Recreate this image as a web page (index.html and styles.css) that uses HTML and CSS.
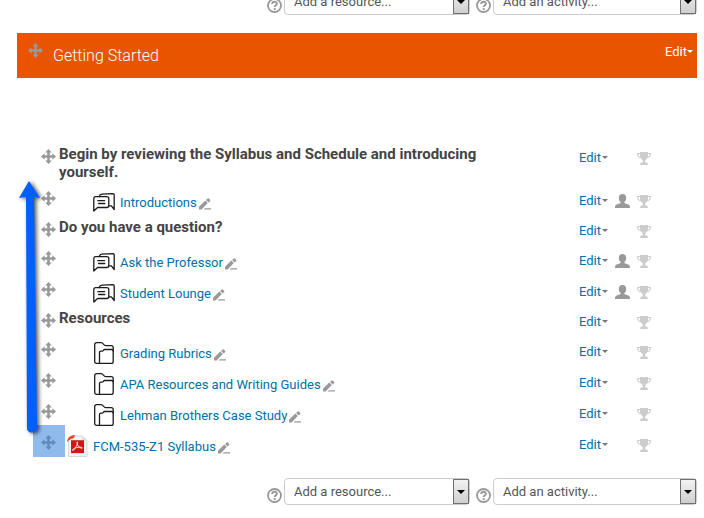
FILE: index.html
```html
<!DOCTYPE html>
<html lang="en">
<head>
    <meta charset="UTF-8">
    <meta name="viewport" content="width=device-width, initial-scale=1.0">
    <title>Getting Started</title>
    <link rel="stylesheet" href="styles.css">
</head>
<body>
    <svg class="sprite" aria-hidden="true">
        <symbol id="move" viewBox="0 0 15 15">
            <path d="M7.5 0l3.3 3.6H8.8v2.6h2.6v-2L15 7.5l-3.6 3.3v-2H8.8v2.6h2L7.5 15l-3.3-3.6h2V8.8H3.6v2L0 7.5l3.6-3.3v2h2.6V3.6h-2z"/>
        </symbol>
        <symbol id="help" viewBox="0 0 15 15">
            <circle cx="7.5" cy="7.5" r="6.5" fill="none" stroke="currentColor" stroke-width="1.8"/>
            <path d="M5.2 6.1c0-3.2 4.7-3 4.7-.4 0 1.5-2.2 1.7-2.2 3.3" fill="none" stroke="currentColor" stroke-width="2"/>
            <path d="M6.7 10.1h2V12h-2z"/>
        </symbol>
        <symbol id="pencil" viewBox="0 0 12 12">
            <path d="M0 8.800L6.300 2.600l2.500 2.500L2.600 11.400H0zM7.100 1.900L8.700.4c.3-.3.700-.3 1 0L11.200 1.900c.3.300.3.700 0 1L9.600 4.400zM5.800 10.200H12v1.200H4.600z"/>
        </symbol>
        <symbol id="trophy" viewBox="0 0 14 13">
            <path d="M3 0h8v1h3c0 3.200-1.300 5-3.900 5.300C9.500 7.400 8.900 8 8.200 8.200v2.300h1.100c.9 0 1.500.6 1.500 1.500v1H3.200v-1c0-.9.600-1.500 1.500-1.500h1.100V8.200C5.100 8 4.500 7.400 3.900 6.300 1.300 6 0 4.200 0 1h3zM1.200 2.100c.2 1.700.8 2.700 1.900 3-.1-.9-.1-1.900-.1-3zM12.800 2.100H11c0 1.100 0 2.100-.1 3 1.100-.3 1.700-1.300 1.900-3z"/>
        </symbol>
        <symbol id="user" viewBox="0 0 15 14">
            <path d="M7.5 0c2.300 0 3.700 1.600 3.700 4 0 1.900-.7 3.300-1.800 4v1c1.200.7 3.800 1 5 2.200.5.600.6 1.700.6 2.800H0c0-1.100.1-2.200.6-2.800C1.800 10 4.400 9.700 5.600 9V8C4.500 7.300 3.800 5.900 3.800 4c0-2.400 1.400-4 3.700-4z"/>
        </symbol>
        <symbol id="forum" viewBox="0 0 22 19">
            <g fill="none" stroke="#1c1c1c" stroke-width="1.3" stroke-linejoin="round" stroke-linecap="round">
                <path d="M2.800 3.700h11c1.400 0 2 .7 2 2v6.800c0 1.300-.6 2-2 2H4.600L.8 18V5.700c0-1.300.6-2 2-2z"/>
                <path d="M6.200 3.500C6.600 1.900 7.200 1.300 9 1.200l11-.5c.8 0 1.200.4 1.200 1.200v14.600l-2.800-3.600h-2.400"/>
                <path d="M4.800 7.700h6.800M5.600 10.500h6.200"/>
            </g>
        </symbol>
        <symbol id="folder" viewBox="0 0 20 22">
            <g fill="none" stroke="#1c1c1c" stroke-width="1.3" stroke-linejoin="round">
                <path d="M5.500 21.300H2.600c-1.200 0-1.900-.7-1.900-1.900V2.600C.7 1.300 1.400.7 2.600.7h4.700c1.900 0 2.300 3 4.400 3h5.500c1.400 0 2 .7 2 2v3.800"/>
                <path d="M5.500 21.300V10.500c0-.8.400-1.300 1.200-1.300h1.500c1.200 0 1.200-1.700 2.400-1.700h7.200c.9 0 1.400.5 1.400 1.400v10.500c0 1.200-.7 1.900-1.900 1.900z"/>
            </g>
        </symbol>
        <symbol id="pdf" viewBox="0 0 20 21">
            <path d="M3 1h11.500L19 5v15.500H1.500V5z" fill="#f3f3f3" stroke="#cfcfcf" stroke-width=".8"/>
            <path d="M14.500 1.200L19 5.500h-4.500z" fill="#dadada"/>
            <path d="M0 7C.3 2.800 2.300.6 7.800 0L6.300 3C3.200 3.500 1.600 4.700 0 7z" fill="#e8432d"/>
            <path d="M3.800 5h12.400v12.300H3.800z" fill="#d01616"/>
            <path d="M9.500 6.500c1.400 0 .2 4-3.500 8.200-1.500.4-.7-1.900 3-2.700s5.800-.3 5.500.5c-.4.900-5.300-1.600-5-6z" fill="none" stroke="#fff" stroke-width=".8"/>
        </symbol>
    </svg>

    <main class="course">
        <div class="add-bar">
            <svg class="help"><use href="#help"/></svg>
            <span class="picker resource">
                <select aria-label="Add a resource"><option>Add a resource...</option></select>
            </span>
            <svg class="help"><use href="#help"/></svg>
            <span class="picker activity">
                <select aria-label="Add an activity"><option>Add an activity...</option></select>
            </span>
        </div>

        <header class="section-header">
            <button type="button" class="move" aria-label="Move section"><svg><use href="#move"/></svg></button>
            <h1>Getting Started</h1>
            <button type="button" class="edit">Edit</button>
        </header>

        <ul class="items">
            <li class="item label">
                <button type="button" class="move" aria-label="Move"><svg><use href="#move"/></svg></button>
                <h2>Begin by reviewing the Syllabus and Schedule and introducing yourself.</h2>
                <div class="actions">
                    <button type="button" class="edit">Edit</button>
                    <svg class="trophy"><use href="#trophy"/></svg>
                </div>
            </li>
            <li class="item">
                <button type="button" class="move" aria-label="Move"><svg><use href="#move"/></svg></button>
                <div class="content">
                    <svg class="forum"><use href="#forum"/></svg>
                    <a href="#">Introductions</a>
                    <button type="button" class="rename" aria-label="Edit title"><svg><use href="#pencil"/></svg></button>
                </div>
                <div class="actions">
                    <button type="button" class="edit">Edit</button>
                    <svg class="user"><use href="#user"/></svg>
                    <svg class="trophy"><use href="#trophy"/></svg>
                </div>
            </li>
            <li class="item label">
                <button type="button" class="move" aria-label="Move"><svg><use href="#move"/></svg></button>
                <h2>Do you have a question?</h2>
                <div class="actions">
                    <button type="button" class="edit">Edit</button>
                    <svg class="trophy"><use href="#trophy"/></svg>
                </div>
            </li>
            <li class="item">
                <button type="button" class="move" aria-label="Move"><svg><use href="#move"/></svg></button>
                <div class="content">
                    <svg class="forum"><use href="#forum"/></svg>
                    <a href="#">Ask the Professor</a>
                    <button type="button" class="rename" aria-label="Edit title"><svg><use href="#pencil"/></svg></button>
                </div>
                <div class="actions">
                    <button type="button" class="edit">Edit</button>
                    <svg class="user"><use href="#user"/></svg>
                    <svg class="trophy"><use href="#trophy"/></svg>
                </div>
            </li>
            <li class="item">
                <button type="button" class="move" aria-label="Move"><svg><use href="#move"/></svg></button>
                <div class="content">
                    <svg class="forum"><use href="#forum"/></svg>
                    <a href="#">Student Lounge</a>
                    <button type="button" class="rename" aria-label="Edit title"><svg><use href="#pencil"/></svg></button>
                </div>
                <div class="actions">
                    <button type="button" class="edit">Edit</button>
                    <svg class="user"><use href="#user"/></svg>
                    <svg class="trophy"><use href="#trophy"/></svg>
                </div>
            </li>
            <li class="item label">
                <button type="button" class="move" aria-label="Move"><svg><use href="#move"/></svg></button>
                <h2>Resources</h2>
                <div class="actions">
                    <button type="button" class="edit">Edit</button>
                    <svg class="trophy"><use href="#trophy"/></svg>
                </div>
            </li>
            <li class="item">
                <button type="button" class="move" aria-label="Move"><svg><use href="#move"/></svg></button>
                <div class="content">
                    <svg class="folder"><use href="#folder"/></svg>
                    <a href="#">Grading Rubrics</a>
                    <button type="button" class="rename" aria-label="Edit title"><svg><use href="#pencil"/></svg></button>
                </div>
                <div class="actions">
                    <button type="button" class="edit">Edit</button>
                    <svg class="trophy"><use href="#trophy"/></svg>
                </div>
            </li>
            <li class="item">
                <button type="button" class="move" aria-label="Move"><svg><use href="#move"/></svg></button>
                <div class="content">
                    <svg class="folder"><use href="#folder"/></svg>
                    <a href="#">APA Resources and Writing Guides</a>
                    <button type="button" class="rename" aria-label="Edit title"><svg><use href="#pencil"/></svg></button>
                </div>
                <div class="actions">
                    <button type="button" class="edit">Edit</button>
                    <svg class="trophy"><use href="#trophy"/></svg>
                </div>
            </li>
            <li class="item">
                <button type="button" class="move" aria-label="Move"><svg><use href="#move"/></svg></button>
                <div class="content">
                    <svg class="folder"><use href="#folder"/></svg>
                    <a href="#">Lehman Brothers Case Study</a>
                    <button type="button" class="rename" aria-label="Edit title"><svg><use href="#pencil"/></svg></button>
                </div>
                <div class="actions">
                    <button type="button" class="edit">Edit</button>
                    <svg class="trophy"><use href="#trophy"/></svg>
                </div>
            </li>
            <li class="item">
                <button type="button" class="move highlighted" aria-label="Move"><svg><use href="#move"/></svg></button>
                <div class="content file">
                    <svg class="pdf"><use href="#pdf"/></svg>
                    <a href="#">FCM-535-Z1 Syllabus</a>
                    <button type="button" class="rename" aria-label="Edit title"><svg><use href="#pencil"/></svg></button>
                </div>
                <div class="actions">
                    <button type="button" class="edit">Edit</button>
                    <svg class="trophy"><use href="#trophy"/></svg>
                </div>
            </li>
        </ul>

        <div class="add-bar">
            <svg class="help"><use href="#help"/></svg>
            <span class="picker resource">
                <select aria-label="Add a resource"><option>Add a resource...</option></select>
            </span>
            <svg class="help"><use href="#help"/></svg>
            <span class="picker activity">
                <select aria-label="Add an activity"><option>Add an activity...</option></select>
            </span>
        </div>

        <!-- arrow from the file up to the top of the list -->
        <svg class="drag-arrow" viewBox="0 0 24 256" aria-hidden="true">
            <path d="M10 1L21 18l-6 -1l3 231c0 6-10 6-10 0L7 17l-7 1z"/>
        </svg>
    </main>
</body>
</html>
```
FILE: styles.css
```css
* {
    box-sizing: border-box;
}

body {
    margin: 0;
    font-family: Roboto, sans-serif;
    font-size: 13px;
    color: #444;
    background-color: #fff;
    overflow: hidden;
}

.sprite {
    position: absolute;
    width: 0;
    height: 0;
}

svg {
    display: block;
    flex: none;
    fill: currentColor;
}

button {
    padding: 0;
    border: none;
    background: none;
    font: inherit;
    cursor: pointer;
}

/* the page sits scrolled down a little, so the first bar is cut */
.course {
    position: relative;
    margin: -12px 7px 0 17px;
}

/* Add resource / activity */
.add-bar {
    display: flex;
    justify-content: flex-end;
    align-items: flex-end;
    gap: 2px;
}

.help {
    width: 15px;
    height: 15px;
    margin-bottom: 2px;
    color: #999;
}

.picker {
    position: relative;
}

.picker.resource {
    width: 186px;
    margin-right: 4px;
}

.picker.activity {
    width: 204px;
}

.picker select {
    display: block;
    width: 100%;
    height: 27px;
    padding: 0 20px 0 9px;
    border: 1px solid #ccc;
    border-radius: 4px;
    appearance: none;
    background-color: #fff;
    color: #555;
    font: inherit;
}

.picker::before {
    content: "";
    position: absolute;
    top: 1px;
    right: 1px;
    bottom: 1px;
    width: 14px;
    border: 1px solid #707070;
    background: linear-gradient(#f2f2f2, #cfcfcf);
    pointer-events: none;
}

.picker::after {
    content: "";
    position: absolute;
    top: 12px;
    right: 5px;
    border: 4px solid transparent;
    border-top-color: #000;
    border-bottom: none;
    pointer-events: none;
}

/* Section header */
.section-header {
    display: flex;
    align-items: flex-start;
    height: 45px;
    margin-top: 18px;
    padding: 10px 4px 0 11px;
    background-color: #e85400;
    color: #fff;
}

.section-header h1 {
    flex: 1;
    margin: 3px 0 0 10px;
    font-size: 16px;
    font-weight: 300;
    line-height: 20px;
}

.section-header .edit {
    gap: 0;
    color: #fff;
}

.move {
    width: 15px;
    height: 15px;
    color: #999;
}

.move svg {
    width: 15px;
    height: 15px;
}

.edit {
    display: flex;
    align-items: center;
    gap: 1px;
    color: #0070a8;
    line-height: 17px;
}

.edit::after {
    content: "";
    border: 3px solid transparent;
    border-top-color: #777;
    border-bottom: none;
}

.section-header .edit::after {
    border-top-color: #fff;
}

/* Course items */
.items {
    margin: 65px 0 18px;
    padding: 0 0 0 24px;
    list-style: none;
}

.item {
    display: grid;
    grid-template-columns: 18px 1fr 118px;
    min-height: 31px;
}

.item .move {
    margin-top: 6px;
}

.item.label {
    min-height: 29px;
}

.item h2 {
    margin: 0;
    padding: 2px 55px 4px 0;
    font-size: 15px;
    font-weight: 700;
    line-height: 18px;
}

.content {
    display: flex;
    align-items: center;
    padding: 3px 0 0 34px;
}

.content.file {
    padding-left: 8px;
}

.content a {
    margin-left: 5px;
    color: #0070a8;
    line-height: 17px;
    text-decoration: none;
}

.forum {
    width: 22px;
    height: 19px;
}

.folder {
    width: 20px;
    height: 22px;
    margin: 0 1px;
}

.pdf {
    width: 21px;
    height: 22px;
}

.rename {
    margin: 4px 0 0 2px;
    color: #999;
}

.rename svg {
    width: 12px;
    height: 12px;
}

.actions {
    display: grid;
    grid-template-columns: 36px 22px 14px;
    align-items: center;
    height: 31px;
}

.label .actions {
    height: 29px;
}

.user {
    grid-column: 2;
    width: 15px;
    height: 14px;
    color: #999;
}

.trophy {
    grid-column: 3;
    width: 14px;
    height: 13px;
    margin-top: 2px;
    color: #ccc;
}

.highlighted {
    position: relative;
}

.highlighted::after {
    content: "";
    position: absolute;
    top: -10px;
    left: -8px;
    width: 32px;
    height: 32px;
    background-color: rgba(55, 130, 220, 0.55);
}

.drag-arrow {
    position: absolute;
    top: 192px;
    left: 2px;
    width: 24px;
    height: 256px;
    overflow: visible;
    fill: #0060ff;
    filter: drop-shadow(2px 1px 2px rgba(0, 0, 0, 0.7));
    pointer-events: none;
}
```
